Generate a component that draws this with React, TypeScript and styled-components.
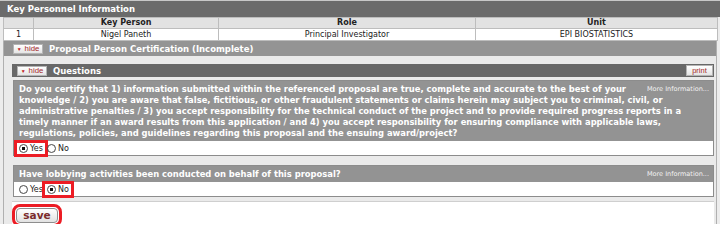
import React from 'react';
import styled, { createGlobalStyle } from 'styled-components';

const GlobalStyle = createGlobalStyle`
  html, body { margin: 0; padding: 0; background: #ffffff; }
  body { font-family: "DejaVu Sans", Verdana, sans-serif; }
`;

type Person = { num: number; name: string; role: string; unit: string };

const people: Person[] = [
  { num: 1, name: 'Nigel Paneth', role: 'Principal Investigator', unit: 'EPI BIOSTATISTICS' },
];

type Question = { id: string; text: string; answer: 'Y' | 'N' };

const questions: Question[] = [
  {
    id: 'q1',
    text:
      'Do you certify that 1) information submitted within the referenced proposal are true, complete and accurate to the best of your knowledge / 2) you are aware that false, fictitious, or other fraudulent statements or claims herein may subject you to criminal, civil, or administrative penalties / 3) you accept responsibility for the technical conduct of the project and to provide required progress reports in a timely manner if an award results from this application / and 4) you accept responsibility for ensuring compliance with applicable laws, regulations, policies, and guidelines regarding this proposal and the ensuing award/project?',
    answer: 'Y',
  },
  { id: 'q2', text: 'Have lobbying activities been conducted on behalf of this proposal?', answer: 'N' },
];

const Page = styled.div`
  width: 720px;
  height: 224px;
  overflow: hidden;
  background: #ececec;
`;

const SectionHeader = styled.div`
  height: 16px;
  border-top: 1px solid #c8c8c8;
  background: #6b6b6b;
  color: #fff;
  font-weight: bold;
  font-size: 8.5px;
  line-height: 16px;
  padding-left: 7px;
`;

const Table = styled.table`
  margin-left: 3px;
  width: 715px;
  border-collapse: collapse;
  table-layout: fixed;
  background: #fff;
  font-size: 8px;
  color: #222;
`;

const Th = styled.th<{ $w?: number }>`
  width: ${p => (p.$w ? `${p.$w}px` : 'auto')};
  height: 10px;
  padding: 0;
  background: #e2e2e2;
  border: 1px solid #bdbdbd;
  font-weight: bold;
  font-size: 8px;
  line-height: 10px;
  text-align: center;
`;

const Td = styled.td`
  height: 11px;
  padding: 0;
  border: 1px solid #bdbdbd;
  line-height: 11px;
  text-align: center;
`;

const Certification = styled.div`
  margin: 0 3px;
  border-left: 1px solid #b0b0b0;
  border-right: 1px solid #b0b0b0;
`;

const SubBar = styled.div<{ $dark?: boolean }>`
  display: flex;
  align-items: center;
  gap: 6px;
  height: ${p => (p.$dark ? 13 : 15)}px;
  padding: 0 1px 0 ${p => (p.$dark ? 5 : 9)}px;
  background: ${p => (p.$dark ? '#686868' : '#949494')};
  color: #fff;
  font-weight: bold;
  font-size: 8.5px;
`;

const BarTitle = styled.span`
  flex: 1;
`;

const SmallButton = styled.button`
  display: inline-flex;
  align-items: center;
  justify-content: center;
  gap: 3px;
  height: 10px;
  width: 30px;
  padding: 0;
  border: 1px solid #b4b4b4;
  background: linear-gradient(#ffffff, #e4e4e4);
  color: #a3282a;
  font-family: "Liberation Sans", Arial, sans-serif;
  font-size: 7.8px;
  line-height: 8px;
  cursor: pointer;
`;

const Arrow = styled.span`
  font-size: 5px;
  color: #c02020;
`;

const PrintButton = styled(SmallButton)`
  height: 11px;
  width: 27px;
  font-size: 7.5px;
`;

const Body = styled.div`
  background: #eaeaea;
  padding: 8px 2px 0 8px;
`;

const QuestionList = styled.div`
  padding: 3px 0 0 1px;
  display: flex;
  flex-direction: column;
  gap: 9px;
`;

const Panel = styled.div`
  border: 1px solid #8c8c8c;
  background: #fff;
`;

const QuestionText = styled.div`
  background: #939393;
  color: #fff;
  font-weight: bold;
  font-size: 8.4px;
  line-height: 11px;
  padding: 3px 4px 2px 5px;
`;

const MoreInfo = styled.span`
  float: right;
  font-weight: normal;
  font-size: 6.5px;
  line-height: 10px;
  color: #f2f2f2;
  margin-left: 8px;
`;

const AnswerRow = styled.div`
  display: flex;
  align-items: center;
  height: 14px;
  padding-left: 3px;
  font-size: 8px;
  color: #222;
`;

const Option = styled.label<{ $marked?: boolean }>`
  display: inline-flex;
  align-items: center;
  gap: 1px;
  padding: 1px 2px;
  outline: ${p => (p.$marked ? '3px solid #ec1c24' : 'none')};
`;

const Radio = styled.input`
  appearance: none;
  width: 9px;
  height: 9px;
  margin: 0 1px 0 0;
  border: 1px solid #4a4a4a;
  border-radius: 50%;
  background: radial-gradient(circle, #fff 50%, #e4e4e4 100%);
  &:checked {
    background: radial-gradient(circle, #111 30%, #fff 36%);
  }
`;

const SaveArea = styled.div`
  margin-top: 4px;
  border-top: 1px solid #cfcfcf;
  background: #fff;
  height: 30px;
  padding: 2px 0 0 4px;
`;

const SaveButton = styled.button`
  width: 42px;
  height: 15px;
  padding: 0;
  border: 1px solid #8e8e8e;
  border-radius: 4px;
  background: linear-gradient(#ffffff, #e2e2e2);
  color: #7a2b2b;
  font-family: "DejaVu Sans", Verdana, sans-serif;
  font-weight: bold;
  font-size: 10.5px;
  line-height: 13px;
  outline: 3px solid #ec1c24;
  outline-offset: 1px;
  cursor: pointer;
`;

const Hide: React.FC = () => (
  <SmallButton>
    <Arrow>▼</Arrow>hide
  </SmallButton>
);

const QuestionPanel: React.FC<{ q: Question }> = ({ q }) => (
  <Panel>
    <QuestionText>
      <MoreInfo>More Information...</MoreInfo>
      {q.text}
    </QuestionText>
    <AnswerRow>
      <Option $marked={q.answer === 'Y'}>
        <Radio type="radio" name={q.id} defaultChecked={q.answer === 'Y'} />
        Yes
      </Option>
      <Option $marked={q.answer === 'N'}>
        <Radio type="radio" name={q.id} defaultChecked={q.answer === 'N'} />
        No
      </Option>
    </AnswerRow>
  </Panel>
);

const App: React.FC = () => {
  return (
    <Page>
      <GlobalStyle />
      <SectionHeader>Key Personnel Information</SectionHeader>
      <Table>
        <thead>
          <tr>
            <Th $w={29}></Th>
            <Th $w={184}>Key Person</Th>
            <Th $w={256}>Role</Th>
            <Th>Unit</Th>
          </tr>
        </thead>
        <tbody>
          {people.map(p => (
            <tr key={p.num}>
              <Td>{p.num}</Td>
              <Td>{p.name}</Td>
              <Td>{p.role}</Td>
              <Td>{p.unit}</Td>
            </tr>
          ))}
        </tbody>
      </Table>
      <Certification>
        <SubBar>
          <Hide />
          <BarTitle>Proposal Person Certification (Incomplete)</BarTitle>
        </SubBar>
        <Body>
          <SubBar $dark>
            <Hide />
            <BarTitle>Questions</BarTitle>
            <PrintButton>print</PrintButton>
          </SubBar>
          <QuestionList>
            {questions.map(q => (
              <QuestionPanel key={q.id} q={q} />
            ))}
          </QuestionList>
          <SaveArea>
            <SaveButton>save</SaveButton>
          </SaveArea>
        </Body>
      </Certification>
    </Page>
  );
};

export default App;
